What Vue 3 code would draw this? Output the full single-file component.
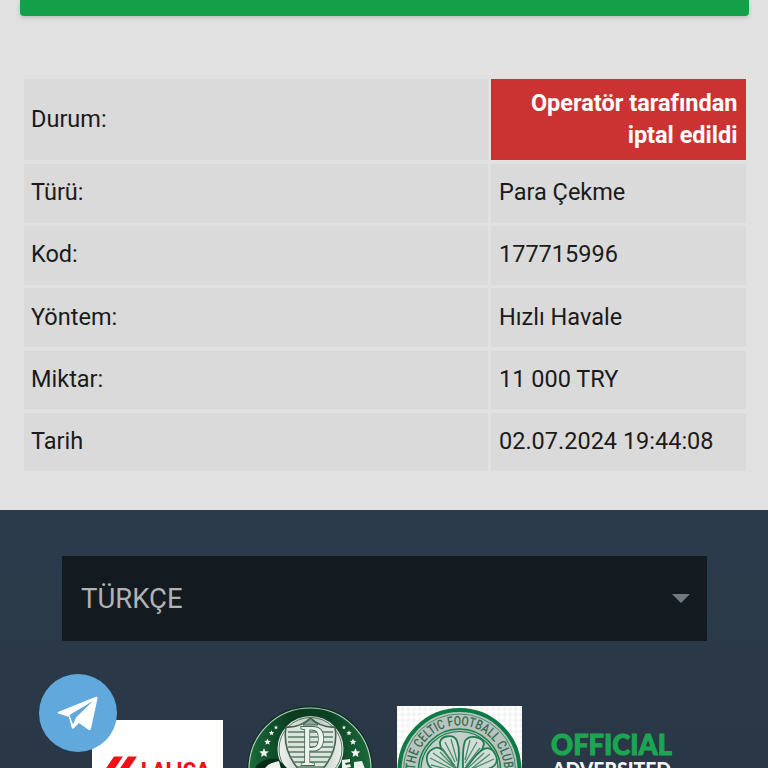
<template>
  <div class="page">
    <section class="content">
      <div class="action-button"></div>
      <div class="details">
        <template v-for="row in rows" :key="row.label">
          <div class="cell">{{ row.label }}</div>
          <div class="cell" :class="{ rejected: row.rejected }">{{ row.value }}</div>
        </template>
      </div>
    </section>

    <footer class="footer">
      <div class="language">
        <span>TÜRKÇE</span>
        <i class="arrow"></i>
      </div>

      <div class="partners">
        <svg class="laliga" width="131" height="80" viewBox="0 0 131 80">
          <rect width="131" height="80" fill="#fff" />
          <path d="M22 36.500h9L13 63H4zM36 36.500h9L27 63H18z" fill="#ee1119" />
          <text x="49" y="57" font-size="20" font-weight="900" textLength="69" lengthAdjust="spacingAndGlyphs" fill="#ee1119">LALIGA</text>
        </svg>

        <svg class="palmeiras" width="126" height="126" viewBox="0 0 126 126">
          <defs>
            <linearGradient id="leaf" x1="0" y1="0" x2="1" y2="0">
              <stop offset="0" stop-color="#1a6b3b" />
              <stop offset="0.35" stop-color="#0a3b1f" />
              <stop offset="0.65" stop-color="#0c4023" />
              <stop offset="1" stop-color="#1a6b3b" />
            </linearGradient>
            <linearGradient id="silver" x1="0" y1="0" x2="1" y2="0">
              <stop offset="0" stop-color="#f1f4f1" />
              <stop offset="0.55" stop-color="#b9c5be" />
              <stop offset="1" stop-color="#eef2ee" />
            </linearGradient>
          </defs>
          <circle cx="63" cy="63" r="63" fill="#0b331d" />
          <circle cx="63" cy="63" r="61" fill="url(#leaf)" stroke="#b6cdbd" stroke-width="1.2" />
          <circle cx="63.500" cy="43" r="33" fill="url(#silver)" />
          <circle cx="63.500" cy="43" r="31.500" fill="none" stroke="#597563" stroke-width="1" />
          <path d="M39 21Q53 22 63.500 12Q74 22 88 21Q93 52 63.500 74Q34 52 39 21Z" fill="#dce4de" stroke="#41644e" stroke-width="1.600" />
          <path d="M41 26H86M41 31H86M41 36H86M41 41H86M42 46H85M43 51H84M46 56H81M50 61H77" stroke="#5a7c65" stroke-width="1.300" />
          <path d="M56 19l7.500-6 7.500 6z" fill="#92a899" stroke="#41644e" />
          <text class="monogram" x="53" y="59" font-size="56" textLength="25" lengthAdjust="spacingAndGlyphs">P</text>
          <path v-for="(star, i) in stars" :key="i" :d="starPath(star)" fill="#f4f6f1" />
          <path d="M8 62Q15 51 31 53L41 63z" fill="#082b19" />
          <path d="M21 59Q26 56 32 55L34 63H17zM107 56l8-1 3 8h-11zM95 54l8-1 0 3-5 1 1 2 4-1 1 3-5 1v2h-4z" fill="#edf1eb" />
        </svg>

        <svg class="celtic" width="125" height="80" viewBox="0 0 125 80">
          <defs>
            <pattern id="checks" width="8" height="8" patternUnits="userSpaceOnUse" patternTransform="rotate(45)">
              <rect width="8" height="8" fill="#fff" />
              <path d="M0 0h4v4H0zM4 4h4v4H4z" fill="#f3f3f3" />
            </pattern>
            <path id="ring" d="M18 64A44.500 44.500 0 0 1 107 64" />
          </defs>
          <rect width="125" height="80" fill="url(#checks)" />
          <circle cx="62.500" cy="64" r="60" fill="#b9c4bf" stroke="#0e7b46" stroke-width="4" />
          <circle cx="62.500" cy="64" r="56" fill="none" stroke="#42906b" stroke-width="1" />
          <circle cx="62.500" cy="64" r="41" fill="#aebfb6" stroke="#167e4c" stroke-width="1.500" />
          <circle cx="62.500" cy="64" r="38.500" fill="#c4cfca" stroke="#167e4c" stroke-width="1.200" />
          <text class="ring-text" font-size="13.500" fill="#346d52">
            <textPath href="#ring" startOffset="0" textLength="138" lengthAdjust="spacingAndGlyphs">THE CELTIC FOOTBALL CLUB</textPath>
          </text>
          <g stroke="#207b50" fill="#d3dcd7" stroke-width="1.800">
            <path d="M60 64C52 53 42 44 43 36C45 29 57 28 60 35C63 43 62 55 60 64z" />
            <path d="M59 65C50 68 34 66 31 58C28 51 31 45 36 43C40 40 45 42 49 48C53 53 57 60 59 65z" />
            <path d="M66 64C66 53 65 43 68 35C73 28 86 31 87 38C85 48 75 57 66 64z" />
            <path d="M67 65C72 58 79 48 85 44C91 40 96 43 98 48C102 54 99 60 93 62C85 66 76 65 67 65z" />
          </g>
          <path d="M48 36l10 20M54 33l6 22M45 42l13 18M36 47l20 14M33 52l22 11M34 59l20 5M43 46l15 16M73 34l-5 20M80 36L68 57M83 42L69 60M87 47L71 62M93 48L74 63M97 53l-22 10" stroke="#4a8e6d" stroke-width="1.300" />
        </svg>

        <svg class="official" width="125" height="50" viewBox="0 0 125 50">
          <text x="1" y="25.500" font-size="29" stroke="#1da651" textLength="121" lengthAdjust="spacingAndGlyphs" fill="#1da651">OFFICIAL</text>
          <text x="2" y="48" font-size="20" textLength="119" lengthAdjust="spacingAndGlyphs" fill="#f3f6f7">ADVERSITED</text>
        </svg>
      </div>
    </footer>

    <a class="telegram">
      <svg width="78" height="78" viewBox="0 0 78 78">
        <path d="M19 38L57 22.800Q59 22.300 58.500 24.500L52 54.500Q51.500 57 49 55.500L40 49L34.500 54.500Q33 55.500 32.500 53L30 43L19.500 39.500Q18 38.700 19 38Z" fill="#fff" />
        <path d="M30.500 41L54 27L37 43.500L34 50.500Z" fill="#61a8dd" />
      </svg>
    </a>
  </div>
</template>

<script setup>
const rows = [
  { label: 'Durum:', value: 'Operatör tarafından iptal edildi', rejected: true },
  { label: 'Türü:', value: 'Para Çekme' },
  { label: 'Kod:', value: '177715996' },
  { label: 'Yöntem:', value: 'Hızlı Havale' },
  { label: 'Miktar:', value: '11 000 TRY' },
  { label: 'Tarih', value: '02.07.2024 19:44:08' }
];

const stars = [
  { x: 17, y: 47, r: 5 },
  { x: 20.5, y: 36, r: 3.5 },
  { x: 24.5, y: 27, r: 2.8 },
  { x: 29, y: 21.5, r: 2.2 },
  { x: 108.5, y: 47, r: 5 },
  { x: 106, y: 36, r: 3.5 },
  { x: 102, y: 27, r: 2.8 },
  { x: 97, y: 21.5, r: 2.2 }
];

const starPath = ({ x, y, r }) => {
  const points = [];
  for (let i = 0; i < 10; i++) {
    const radius = i % 2 ? r * 0.45 : r;
    const angle = (i * Math.PI) / 5 - Math.PI / 2;
    points.push(`${x + radius * Math.cos(angle)} ${y + radius * Math.sin(angle)}`);
  }
  return `M${points.join('L')}Z`;
};
</script>

<style>
body {
  background: #e1e1e1;
}
</style>

<style scoped>
.page {
  position: relative;
  height: 768px;
  overflow: hidden;
  display: flex;
  flex-direction: column;
  font-family: Roboto, sans-serif;
  color: #1b1b1b;
}

.content {
  box-sizing: border-box;
  height: 510px;
  flex-shrink: 0;
  padding: 0 19px 0 20px;
  background: #e1e1e1;
}

.action-button {
  height: 16px;
  background: #13a049;
  border-radius: 0 0 4px 4px;
  box-shadow: 0 2px 4px rgba(0, 0, 0, 0.16);
}

.details {
  display: grid;
  grid-template-columns: 464px 255px;
  grid-template-rows: 81px repeat(5, 58.6px);
  gap: 3.6px 3px;
  margin: 63.4px 0 0 4px;
}

.cell {
  display: flex;
  align-items: center;
  padding: 0 8px 2px 7px;
  background: #dadada;
  font-size: 23.5px;
  line-height: 32px;
}

.cell:nth-child(even) {
  padding-left: 8px;
}

.cell.rejected {
  justify-content: flex-end;
  padding-right: 8.5px;
  background: #cb3333;
  color: #fff;
  font-weight: 700;
  text-align: right;
}

.footer {
  box-sizing: border-box;
  height: 258px;
  padding: 46px 61px 0 62px;
  background: linear-gradient(#2c3b4b, #293746);
}

.language {
  box-sizing: border-box;
  display: flex;
  align-items: center;
  justify-content: space-between;
  height: 85px;
  padding: 0 17px 0 19px;
  background: #131b21;
  color: #b0b2b3;
  font-size: 27.5px;
}

.arrow {
  border: solid transparent;
  border-width: 9px 9px 0;
  border-top-color: #74777b;
}

.partners {
  display: flex;
  align-items: flex-start;
  padding: 65px 0 0 30px;
}

.partners svg {
  flex-shrink: 0;
  font-family: Roboto, sans-serif;
}

.laliga {
  margin: 14px 24px 0 0;
}

.celtic {
  margin-left: 24px;
}

.partners .official {
  margin: 23px 0 0 28px;
  font-family: Lato, sans-serif;
  font-weight: 900;
}

.monogram {
  font-family: 'Liberation Serif', serif;
  fill: #eef2ed;
  stroke: #416850;
  stroke-width: 2px;
  paint-order: stroke;
}

.ring-text {
  font-weight: 500;
}

.telegram {
  position: absolute;
  left: 39px;
  top: 673.5px;
  width: 78px;
  height: 78px;
  border-radius: 50%;
  background: #61a8dd;
}
</style>
